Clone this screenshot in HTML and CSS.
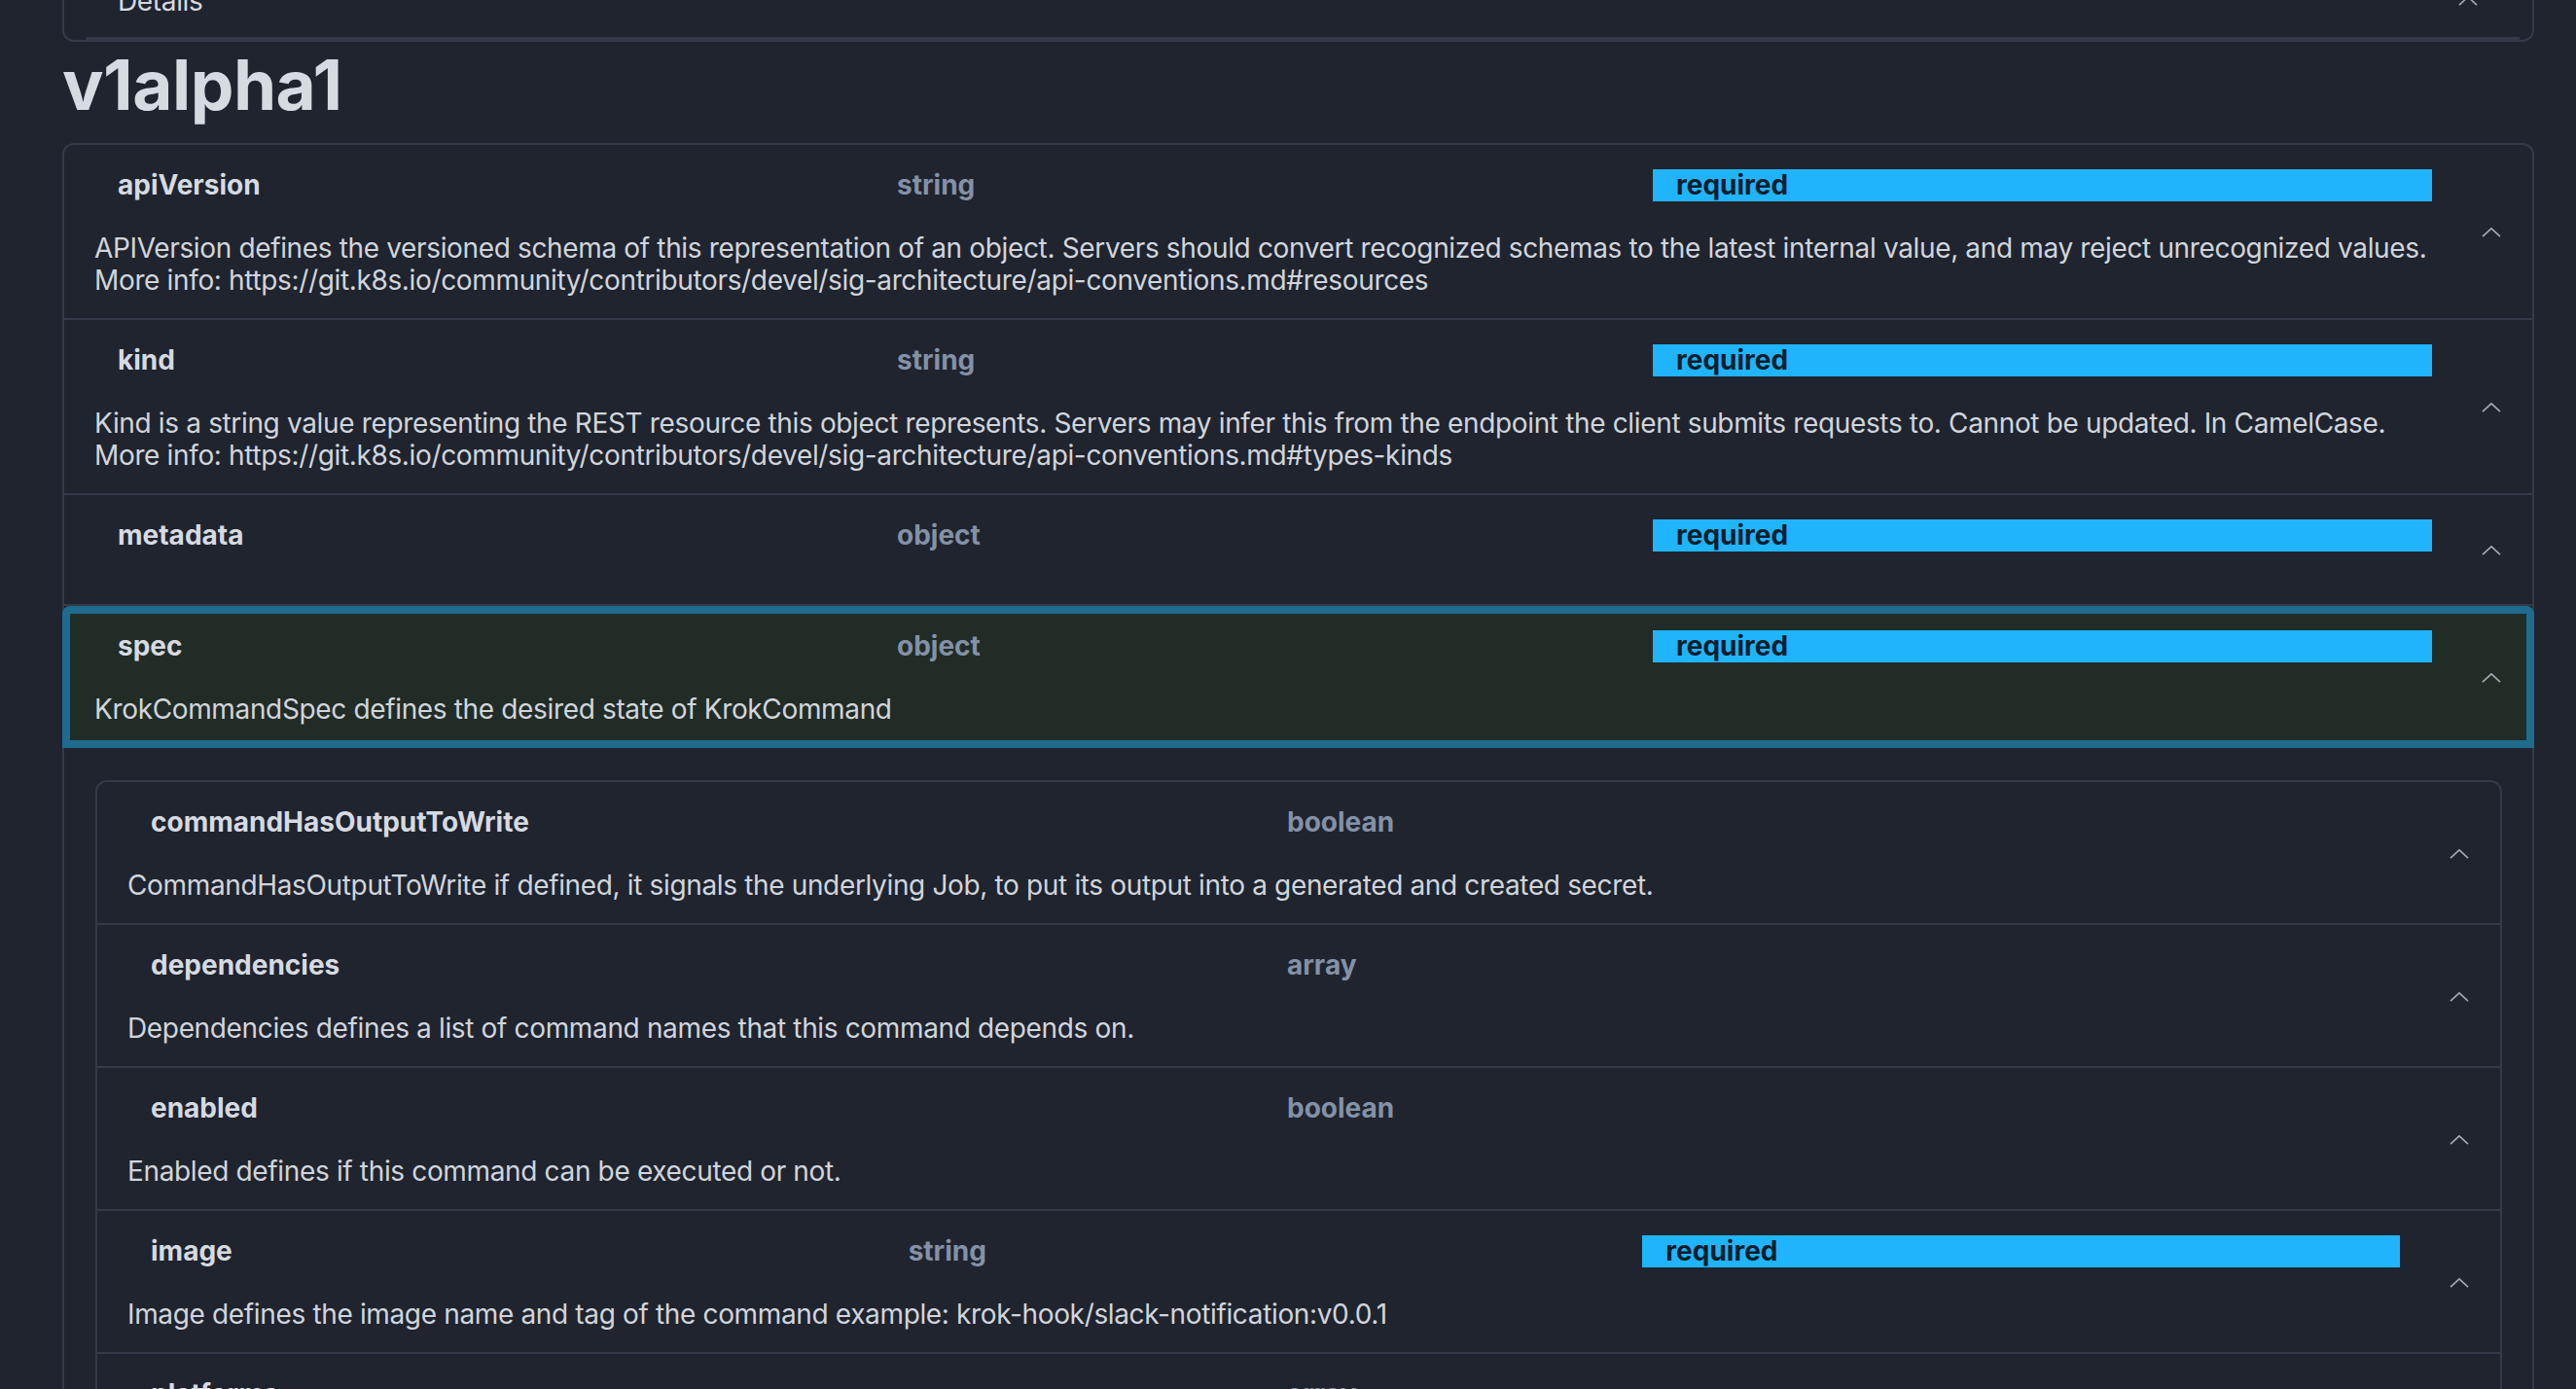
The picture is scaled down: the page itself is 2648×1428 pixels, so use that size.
FILE: index.html
```html
<!DOCTYPE html>
<html lang="en">
<head>
<meta charset="utf-8">
<title>KrokCommand v1alpha1</title>
<link rel="stylesheet" href="styles.css">
</head>
<body>
<div class="page">
  <div class="details">
    <div class="details-sum">
      <span class="details-title">Details</span>
      <svg class="chev" viewBox="0 0 20 10"><polyline points="1,9.2 10,0.8 19,9.2"/></svg>
    </div>
    <div class="details-bar"></div>
  </div>

  <h1 class="version">v1alpha1</h1>

  <div class="card">
    <div class="row">
      <div class="row-main">
        <div class="head">
          <span class="name">apiVersion</span>
          <span class="type">string</span>
          <span class="req"><span class="badge">required</span></span>
        </div>
        <div class="desc">APIVersion defines the versioned schema of this representation of an object. Servers should convert recognized schemas to the latest internal value, and may reject unrecognized values.<br>More info: https://git.k8s.io/community/contributors/devel/sig-architecture/api-conventions.md#resources</div>
      </div>
      <svg class="chev" viewBox="0 0 20 10"><polyline points="1,9.2 10,0.8 19,9.2"/></svg>
    </div>
    <div class="row">
      <div class="row-main">
        <div class="head">
          <span class="name">kind</span>
          <span class="type">string</span>
          <span class="req"><span class="badge">required</span></span>
        </div>
        <div class="desc">Kind is a string value representing the REST resource this object represents. Servers may infer this from the endpoint the client submits requests to. Cannot be updated. In CamelCase.<br>More info: https://git.k8s.io/community/contributors/devel/sig-architecture/api-conventions.md#types-kinds</div>
      </div>
      <svg class="chev" viewBox="0 0 20 10"><polyline points="1,9.2 10,0.8 19,9.2"/></svg>
    </div>
    <div class="row">
      <div class="row-main">
        <div class="head">
          <span class="name">metadata</span>
          <span class="type">object</span>
          <span class="req"><span class="badge">required</span></span>
        </div>
        <div class="desc"></div>
      </div>
      <svg class="chev" viewBox="0 0 20 10"><polyline points="1,9.2 10,0.8 19,9.2"/></svg>
    </div>
    <div class="row active">
      <div class="row-main">
        <div class="head">
          <span class="name">spec</span>
          <span class="type">object</span>
          <span class="req"><span class="badge">required</span></span>
        </div>
        <div class="desc">KrokCommandSpec defines the desired state of KrokCommand</div>
      </div>
      <svg class="chev" viewBox="0 0 20 10"><polyline points="1,9.2 10,0.8 19,9.2"/></svg>
    </div>

    <div class="sub">
      <div class="card">
        <div class="row">
          <div class="row-main">
            <div class="head">
              <span class="name">commandHasOutputToWrite</span>
              <span class="type">boolean</span>
            </div>
            <div class="desc">CommandHasOutputToWrite if defined, it signals the underlying Job, to put its output into a generated and created secret.</div>
          </div>
          <svg class="chev" viewBox="0 0 20 10"><polyline points="1,9.2 10,0.8 19,9.2"/></svg>
        </div>
        <div class="row">
          <div class="row-main">
            <div class="head">
              <span class="name">dependencies</span>
              <span class="type">array</span>
            </div>
            <div class="desc">Dependencies defines a list of command names that this command depends on.</div>
          </div>
          <svg class="chev" viewBox="0 0 20 10"><polyline points="1,9.2 10,0.8 19,9.2"/></svg>
        </div>
        <div class="row">
          <div class="row-main">
            <div class="head">
              <span class="name">enabled</span>
              <span class="type">boolean</span>
            </div>
            <div class="desc">Enabled defines if this command can be executed or not.</div>
          </div>
          <svg class="chev" viewBox="0 0 20 10"><polyline points="1,9.2 10,0.8 19,9.2"/></svg>
        </div>
        <div class="row">
          <div class="row-main">
            <div class="head">
              <span class="name">image</span>
              <span class="type">string</span>
              <span class="req"><span class="badge">required</span></span>
            </div>
            <div class="desc">Image defines the image name and tag of the command example: krok-hook/slack-notification:v0.0.1</div>
          </div>
          <svg class="chev" viewBox="0 0 20 10"><polyline points="1,9.2 10,0.8 19,9.2"/></svg>
        </div>
        <div class="row">
          <div class="row-main">
            <div class="head">
              <span class="name">platforms</span>
              <span class="type">array</span>
            </div>
            <div class="desc">Platforms holds all the platforms which this command supports.</div>
          </div>
          <svg class="chev" viewBox="0 0 20 10"><polyline points="1,9.2 10,0.8 19,9.2"/></svg>
        </div>
        <div class="row">
          <div class="row-main">
            <div class="head">
              <span class="name">readInputFromSecret</span>
              <span class="type">object</span>
            </div>
            <div class="desc">ReadInputFromSecret if defined, the command will take a list of key/value pairs from a secret and apply them as arguments to the command.</div>
          </div>
          <svg class="chev" viewBox="0 0 20 10"><polyline points="1,9.2 10,0.8 19,9.2"/></svg>
        </div>
      </div>
    </div>
  </div>
</div>
</body>
</html>
```

FILE: styles.css
```css
* {
  box-sizing: border-box;
}

html {
  overflow: hidden;
  background: #1f242f;
}

body {
  margin: 0;
  background: #1f242f;
  color: #d1d5dc;
  font-family: Inter, "Noto Sans", "Liberation Sans", sans-serif;
  font-size: 28px;
}

.page {
  padding: 0 43px 0 64px;
}

/* collapsed "Details" card cut by the top edge */
.details {
  margin-top: -36px;
  padding-top: 20px;
  border: 2px solid #343a48;
  border-top: 0;
  border-radius: 0 0 12px 12px;
}

.details-sum {
  display: flex;
  align-items: center;
  justify-content: space-between;
  height: 34px;
  padding: 0 56px 0 55px;
  line-height: 34px;
  letter-spacing: -0.35px;
  color: #d6dae1;
}

.details-bar {
  height: 3px;
  margin: 20px 13px 0 23px;
  background: #343a48;
}

.version {
  margin: 2px 0 18px;
  font-size: 71px;
  line-height: 84px;
  font-weight: 700;
  letter-spacing: -0.5px;
  color: #d6dae1;
}

.card {
  border: 2px solid #343a48;
  border-radius: 12px;
}

.row {
  display: flex;
  align-items: center;
  padding: 24px 32px 22px 31px;
  border-bottom: 2px solid #343a48;
}

.row:last-child {
  border-bottom: 0;
}

.row.active {
  margin: 0 -2px;
  padding: 24px 34px 23px 33px;
  border-bottom: 0;
  border-radius: 8px 8px 0 0;
  background: #212c26;
  box-shadow: inset 0 0 0 8px #1f6b8e;
}

.row-main {
  flex: 1;
  min-width: 0;
  margin-right: 27px;
}

.head {
  display: flex;
  align-items: center;
  height: 34px;
  padding-left: 24px;
  font-weight: 700;
  line-height: 34px;
}

.head > span {
  flex: 1 1 0;
  min-width: 0;
}

.name {
  color: #d6dae1;
}

.type {
  color: #8491a6;
}

.badge {
  display: block;
  width: 100%;
  height: 33px;
  margin-left: -24px;
  padding-left: 24px;
  line-height: 33px;
  background: #20b4fd;
  color: #0a1e2c;
}

.desc {
  margin-top: 32px;
  line-height: 33px;
  letter-spacing: -0.35px;
  color: #d1d5dc;
}

.chev {
  flex: none;
  width: 20px;
  height: 10px;
  fill: none;
  stroke: #a6aab2;
  stroke-width: 1.6;
}

.sub {
  padding: 33px 31px 0 32px;
}
```
